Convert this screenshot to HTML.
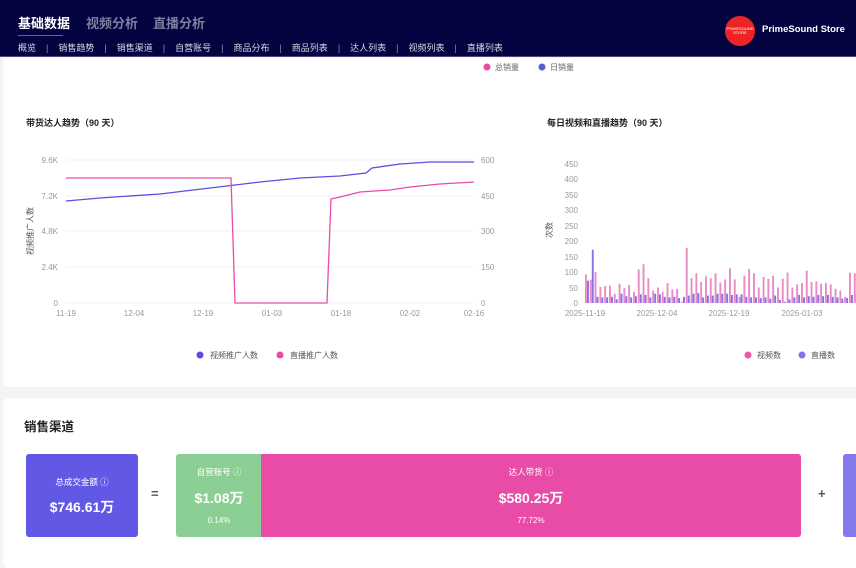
<!DOCTYPE html><html><head><meta charset="utf-8"><style>
*{margin:0;padding:0;box-sizing:border-box}
body{width:856px;height:557px;overflow:hidden;background:#f3f4f6;font-family:"Liberation Sans","Noto Sans CJK SC",sans-serif;position:relative}
.hdr{position:absolute;left:0;top:0;width:856px;height:57px;background:#03033f;border-bottom:1px solid #4a4a80}
.t{position:absolute;top:13px;font-size:13px;font-weight:bold;color:#7d7fa0}
.sub{position:absolute;top:41px;left:18px;font-size:9px;color:#d8d9e8;white-space:nowrap}
.sub span{margin-right:10px}.sub i{font-style:normal;color:#8c8db0;margin-right:10px}
.card{position:absolute;background:#fff;border-radius:6px}
.ax{font-size:8px;fill:#999}
</style></head><body>
<div class="hdr">
<div class="t" style="left:18px;color:#fff">基础数据</div>
<div style="position:absolute;left:18px;top:35px;width:45px;height:1px;background:#5b5bd6"></div>
<div class="t" style="left:86px">视频分析</div>
<div class="t" style="left:153px">直播分析</div>
<div class="sub"><span>概览</span><i>|</i><span>销售趋势</span><i>|</i><span>销售渠道</span><i>|</i><span>自营账号</span><i>|</i><span>商品分布</span><i>|</i><span>商品列表</span><i>|</i><span>达人列表</span><i>|</i><span>视频列表</span><i>|</i><span>直播列表</span></div>
<div style="position:absolute;left:725px;top:16px;width:30px;height:30px;border-radius:50%;background:#ee2424;color:#fff;font-size:4px;text-align:center;padding-top:11px;line-height:4px">PRIMESOUND<br>STORE</div>
<div style="position:absolute;left:762px;top:24px;color:#fff;font-size:9.5px;font-weight:bold">PrimeSound Store</div>
</div>
<div class="card" style="left:3px;top:58px;width:860px;height:329px;border-radius:0 0 6px 6px"></div>
<svg style="position:absolute;left:0;top:58px" width="856" height="329">
<circle cx="487" cy="9" r="3.5" fill="#e84ca7"/><text x="495" y="12" font-size="8" fill="#666">总销量</text>
<circle cx="542" cy="9" r="3.5" fill="#5b5bd6"/><text x="550" y="12" font-size="8" fill="#666">日销量</text>
<text x="26" y="68" font-size="9" font-weight="bold" fill="#222">带货达人趋势（90 天）</text>
<text x="547" y="68" font-size="9" font-weight="bold" fill="#222">每日视频和直播趋势（90 天）</text>
</svg>
<svg style="position:absolute;left:0;top:140px" width="500" height="230">
<g stroke="#f0f0f0"><line x1="66" x2="474" y1="20" y2="20"/><line x1="66" x2="474" y1="56" y2="56"/><line x1="66" x2="474" y1="91" y2="91"/><line x1="66" x2="474" y1="127" y2="127"/><line x1="66" x2="474" y1="163" y2="163"/></g>
<g class="ax" text-anchor="end"><text x="58" y="23">9.6K</text><text x="58" y="59">7.2K</text><text x="58" y="94">4.8K</text><text x="58" y="130">2.4K</text><text x="58" y="166">0</text></g>
<g class="ax"><text x="481" y="23">600</text><text x="481" y="59">450</text><text x="481" y="94">300</text><text x="481" y="130">150</text><text x="481" y="166">0</text></g>
<g class="ax" text-anchor="middle"><text x="66" y="176">11-19</text><text x="134" y="176">12-04</text><text x="203" y="176">12-19</text><text x="272" y="176">01-03</text><text x="341" y="176">01-18</text><text x="410" y="176">02-02</text><text x="474" y="176">02-16</text></g>
<text transform="translate(33,115) rotate(-90)" font-size="8" fill="#555">视频推广人数</text>
<text transform="translate(510,115) rotate(-90)" font-size="8" fill="#555">直播推广人数</text>
<polyline fill="none" stroke="#5b4fe0" stroke-width="1.3" points="66,61 100,58 160,54 210,48 260,42 300,38 340,36 366,33 372,28 400,24 430,22 474,22"/>
<polyline fill="none" stroke="#e84ca7" stroke-width="1.3" points="66,38 231,38 235,163 327,163 331,59 340,57 360,52 390,50 410,47 440,44 474,42"/>
<circle cx="200" cy="215" r="3.5" fill="#5b4fe0"/><text x="210" y="218" font-size="8" fill="#555">视频推广人数</text>
<circle cx="280" cy="215" r="3.5" fill="#e84ca7"/><text x="290" y="218" font-size="8" fill="#555">直播推广人数</text>
</svg>
<svg id="bc" style="position:absolute;left:540px;top:140px" width="316" height="230">
<g class="ax" text-anchor="end"><text x="38" y="27">450</text><text x="38" y="42">400</text><text x="38" y="58">350</text><text x="38" y="73">300</text><text x="38" y="89">250</text><text x="38" y="104">200</text><text x="38" y="120">150</text><text x="38" y="135">100</text><text x="38" y="151">50</text><text x="38" y="166">0</text></g>
<text transform="translate(12,98) rotate(-90)" font-size="8" fill="#555">次数</text>
<g class="ax" text-anchor="middle"><text x="45" y="176">2025-11-19</text><text x="117" y="176">2025-12-04</text><text x="189" y="176">2025-12-19</text><text x="262" y="176">2026-01-03</text><text x="318" y="176">2</text></g>
<circle cx="208" cy="215" r="3.5" fill="#e8599f"/><text x="217" y="218" font-size="8" fill="#555">视频数</text>
<circle cx="262" cy="215" r="3.5" fill="#8a6fe8"/><text x="271" y="218" font-size="8" fill="#555">直播数</text>
<g id="bars"></g>
</svg>
<script>
var v=[92,75,100,52,55,56,30,62,48,58,36,108,125,80,40,50,36,64,44,46,4,178,80,96,68,86,80,96,66,76,112,76,20,88,110,96,50,84,78,88,50,78,98,50,60,64,104,68,70,62,64,60,46,40,20,98,96];
var l=[72,172,20,18,18,20,12,30,22,18,22,28,26,18,30,28,20,18,20,16,20,24,30,32,18,24,24,30,30,30,26,28,28,20,18,18,16,18,14,24,10,4,12,18,26,18,22,20,26,22,26,20,18,14,16,26,28];
var s='';for(var i=0;i<v.length;i++){var x=45+i*4.8;s+='<rect x="'+x+'" y="'+(163-v[i]*0.31)+'" width="1.9" height="'+v[i]*0.31+'" fill="#e88cc4"/><rect x="'+(x+2)+'" y="'+(163-l[i]*0.31)+'" width="1.9" height="'+l[i]*0.31+'" fill="#8a6fe8"/>';}
document.getElementById('bars').innerHTML=s;
</script>
<div class="card" style="left:3px;top:398px;width:860px;height:170px"></div>
<div style="position:absolute;left:24px;top:416px;font-size:12.5px;font-weight:bold;color:#222">销售渠道</div>
<div style="position:absolute;left:26px;top:454px;width:112px;height:83px;background:#6159e6;border-radius:3px;color:#fff;text-align:center">
<div style="font-size:8.5px;margin-top:22px">总成交金额 ⓘ</div><div style="font-size:14px;font-weight:bold;margin-top:9px">$746.61万</div></div>
<div style="position:absolute;left:151px;top:486px;font-size:13px;font-weight:bold;color:#555">=</div>
<div style="position:absolute;left:176px;top:454px;width:86px;height:83px;background:#8ccf94;border-radius:3px 0 0 3px;color:#fff;text-align:center">
<div style="font-size:8.5px;margin-top:12px">自营账号 ⓘ</div><div style="font-size:14px;font-weight:bold;margin-top:10px">$1.08万</div><div style="font-size:8px;margin-top:8px">0.14%</div></div>
<div style="position:absolute;left:261px;top:454px;width:540px;height:83px;background:#e84ca7;border-radius:0 3px 3px 0;color:#fff;text-align:center">
<div style="font-size:8.5px;margin-top:12px">达人带货 ⓘ</div><div style="font-size:14px;font-weight:bold;margin-top:10px">$580.25万</div><div style="font-size:8px;margin-top:8px">77.72%</div></div>
<div style="position:absolute;left:818px;top:486px;font-size:13px;font-weight:bold;color:#555">+</div>
<div style="position:absolute;left:843px;top:454px;width:20px;height:83px;background:#8479ec;border-radius:3px"></div>
</body></html>
